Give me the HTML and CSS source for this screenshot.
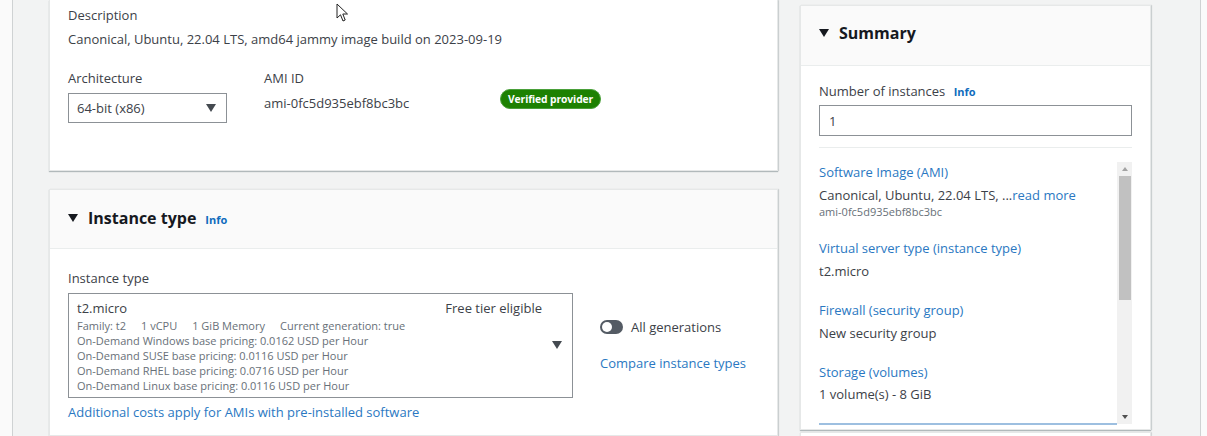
FILE: index.html
```html
<!DOCTYPE html>
<html lang="en">
<head>
<meta charset="utf-8">
<title>Launch instance</title>
<link rel="stylesheet" href="styles.css">
</head>
<body>
<div class="page">
  <div class="edge edge-left"></div>
  <div class="main">
    <div class="col-left">
      <section class="card card-ami">
        <div class="field">
          <div class="label">Description</div>
          <div class="value desc">Canonical, Ubuntu, 22.04 LTS, amd64 jammy image build on 2023-09-19</div>
        </div>
        <div class="ami-row">
          <div class="field arch">
            <div class="label">Architecture</div>
            <div class="select arch-select"><span>64-bit (x86)</span><span class="caret"></span></div>
          </div>
          <div class="field ami-id">
            <div class="label">AMI ID</div>
            <div class="value">ami-0fc5d935ebf8bc3bc</div>
          </div>
          <span class="badge">Verified provider</span>
        </div>
      </section>

      <section class="card card-it">
        <header class="card-head">
          <span class="tri"></span>
          <h2>Instance type</h2>
          <a class="info">Info</a>
        </header>
        <div class="card-body">
          <div class="label">Instance type</div>
          <div class="it-row">
            <div class="it-select">
              <div class="it-top"><span class="it-name">t2.micro</span><span class="free">Free tier eligible</span></div>
              <div class="it-details">
                <div class="it-family"><span>Family: t2</span><span>1 vCPU</span><span>1 GiB Memory</span><span>Current generation: true</span></div>
                <div>On-Demand Windows base pricing: 0.0162 USD per Hour</div>
                <div>On-Demand SUSE base pricing: 0.0116 USD per Hour</div>
                <div>On-Demand RHEL base pricing: 0.0716 USD per Hour</div>
                <div>On-Demand Linux base pricing: 0.0116 USD per Hour</div>
              </div>
              <span class="caret it-caret"></span>
            </div>
            <div class="it-side">
              <div class="toggle-row"><span class="toggle"><span class="knob"></span></span><span>All generations</span></div>
              <a class="link">Compare instance types</a>
            </div>
          </div>
          <a class="link addl">Additional costs apply for AMIs with pre-installed software</a>
        </div>
      </section>
    </div>

    <aside class="col-right">
      <section class="card summary">
        <header class="card-head sum-head">
          <span class="tri"></span>
          <h2>Summary</h2>
        </header>
        <div class="sum-body">
          <div class="label">Number of instances <a class="info">Info</a></div>
          <div class="input">1</div>
          <div class="divider"></div>
          <div class="scroll">
            <div class="scroll-content">
              <div class="item">
                <a class="link">Software Image (AMI)</a>
                <div class="value">Canonical, Ubuntu, 22.04 LTS, ...<a class="link">read more</a></div>
                <div class="sub">ami-0fc5d935ebf8bc3bc</div>
              </div>
              <div class="item">
                <a class="link">Virtual server type (instance type)</a>
                <div class="value">t2.micro</div>
              </div>
              <div class="item">
                <a class="link">Firewall (security group)</a>
                <div class="value">New security group</div>
              </div>
              <div class="item">
                <a class="link">Storage (volumes)</a>
                <div class="value">1 volume(s) - 8 GiB</div>
              </div>
            </div>
            <div class="scrollbar">
              <span class="sb-up"></span>
              <span class="sb-thumb"></span>
              <span class="sb-space"></span>
              <span class="sb-down"></span>
            </div>
          </div>
        </div>
      </section>
      <div class="card next"></div>
    </aside>
  </div>
  <div class="edge edge-right"></div>
</div>
<svg class="cursor" width="13" height="20" viewBox="0 0 13 20"><path d="M1 1 L1 15 L4.5 11.8 L7 18 L9.2 17 L6.8 11 L11.5 11 Z" fill="#fff" stroke="#222" stroke-width="1" stroke-linejoin="round"/></svg>
</body>
</html>
```

FILE: styles.css
```css
* { box-sizing: border-box; }
html, body { margin: 0; padding: 0; }
body {
  font-family: "Open Sans", "Noto Sans", sans-serif;
  font-size: 13px;
  color: #16191f;
  background: #f2f3f3;
  overflow: hidden;
  height: 436px;
}
a { text-decoration: none; }
.page { display: flex; height: 436px; }
.edge { background: #fafafa; }
.edge-left { width: 13px; border-right: 1px solid #cfd2d3; }
.edge-right { width: 7px; border-left: 1px solid #cfd2d3; }
.main {
  flex: 1;
  display: flex;
  gap: 22px;
  padding: 0 49px 0 36px;
  background: #f2f3f3;
}
.col-left { width: 729px; display: flex; flex-direction: column; gap: 18px; }
.col-right { width: 351px; display: flex; flex-direction: column; gap: 2px; padding-top: 5px; }

.card {
  background: #fff;
  border: 1px solid #e6e8e8;
  box-shadow: 0 1px 1px rgba(0, 28, 36, 0.25), 1px 0 1px rgba(0, 28, 36, 0.12);
}
.label { color: #3c4148; line-height: 18px; }
.value { color: #3c4148; line-height: 18px; }
.link { color: #2a78c2; }
.info { color: #0f6cbd; font-weight: 700; font-size: 11px; margin-left: 5px; }

/* AMI card */
.card-ami { height: 171px; padding: 6px 18px 0; border-top: none; }
.field .value.desc { margin-top: 6px; }
.ami-row { display: flex; align-items: flex-start; margin-top: 21px; }
.arch { width: 196px; }
.select {
  margin-top: 6px;
  height: 30px;
  border: 1px solid #8c9196;
  display: flex;
  align-items: center;
  justify-content: space-between;
  padding: 0 10px 0 8px;
  color: #3c4148;
}
.arch-select { width: 159px; }
.caret {
  width: 0; height: 0;
  border-left: 5.5px solid transparent;
  border-right: 5.5px solid transparent;
  border-top: 8px solid #444a50;
}
.ami-id { width: 236px; }
.ami-id .value { margin-top: 7px; }
.badge {
  margin-top: 20px;
  background: #1d8102;
  color: #fff;
  font-weight: 700;
  font-size: 10.3px;
  letter-spacing: -0.1px;
  line-height: 18px;
  padding: 0 7px;
  border-radius: 10px;
  border: 1px solid #4aa03a;
}

/* Card header */
.card-head {
  display: flex;
  align-items: center;
  height: 59px;
  padding: 0 18px 2px;
  background: #fafafa;
  border-bottom: 1px solid #eaeded;
}
.tri {
  width: 0; height: 0;
  border-left: 5px solid transparent;
  border-right: 5px solid transparent;
  border-top: 8px solid #16191f;
  margin-right: 10px;
}
.card-head h2 { margin: 0; font-size: 16px; font-weight: 700; color: #16191f; }
.card-head .info { margin-left: 9px; margin-top: 2px; }

/* Instance type card */
.card-it { flex: 1; }
.card-body { padding: 20px 18px 0; }
.it-row { display: flex; margin-top: 6px; }
.it-select {
  position: relative;
  width: 505px;
  height: 105px;
  border: 1px solid #8c9196;
  padding: 5px 30px 0 8px;
}
.it-top { display: flex; justify-content: space-between; color: #3c4148; line-height: 18px; }
.it-details { color: #687078; font-size: 11px; line-height: 15px; margin-top: 1px; }
.it-family { display: flex; gap: 15px; }
.it-caret { position: absolute; right: 10px; top: 47px; }
.it-side { margin-left: 27px; padding-top: 25px; display: flex; flex-direction: column; gap: 18px; }
.toggle-row { display: flex; align-items: center; gap: 8px; color: #3c4148; }
.toggle {
  width: 23px; height: 14px;
  border-radius: 7px;
  background: #545b64;
  position: relative;
}
.knob {
  position: absolute; left: 2px; top: 2px;
  width: 10px; height: 10px; border-radius: 50%;
  background: #fff;
}
.addl { display: block; margin-top: 5px; }

/* Summary */
.sum-head { height: 60px; padding-bottom: 5px; }
.summary { height: 425px; }
.sum-body { padding: 16px 18px 0; }
.input {
  margin-top: 4px;
  height: 31px;
  border: 1px solid #8c9196;
  padding: 0 9px;
  display: flex;
  align-items: center;
  color: #3c4148;
}
.divider { border-top: 1px solid #eaeded; margin-top: 11px; }
.scroll { display: flex; margin-top: 14px; height: 263px; }
.scroll-content {
  flex: 1;
  border-bottom: 2px solid #9dbfe0;
  padding-top: 1px;
}
.item { display: flex; flex-direction: column; margin-bottom: 21px; }
.item .link { line-height: 18px; }
.item .value { margin-top: 5px; }
.item .sub { font-size: 11px; color: #687078; line-height: 14px; margin-top: 1px; }
.item:first-child { margin-bottom: 20px; }
.item:last-child .value { margin-top: 4px; }
.scrollbar {
  width: 15px;
  background: #f1f1f1;
  display: flex;
  flex-direction: column;
  align-items: center;
  height: 262px;
}
.sb-up, .sb-down { width: 0; height: 0; border-left: 3.5px solid transparent; border-right: 3.5px solid transparent; margin: 5px 0; }
.sb-up { border-bottom: 4px solid #a3a3a3; }
.sb-down { border-top: 4px solid #505050; }
.sb-thumb { width: 12px; height: 124px; background: #c1c1c1; }
.sb-space { flex: 1; }
.next { flex: 1; border-bottom: none; }

.cursor { position: absolute; left: 336px; top: 3px; }
```
